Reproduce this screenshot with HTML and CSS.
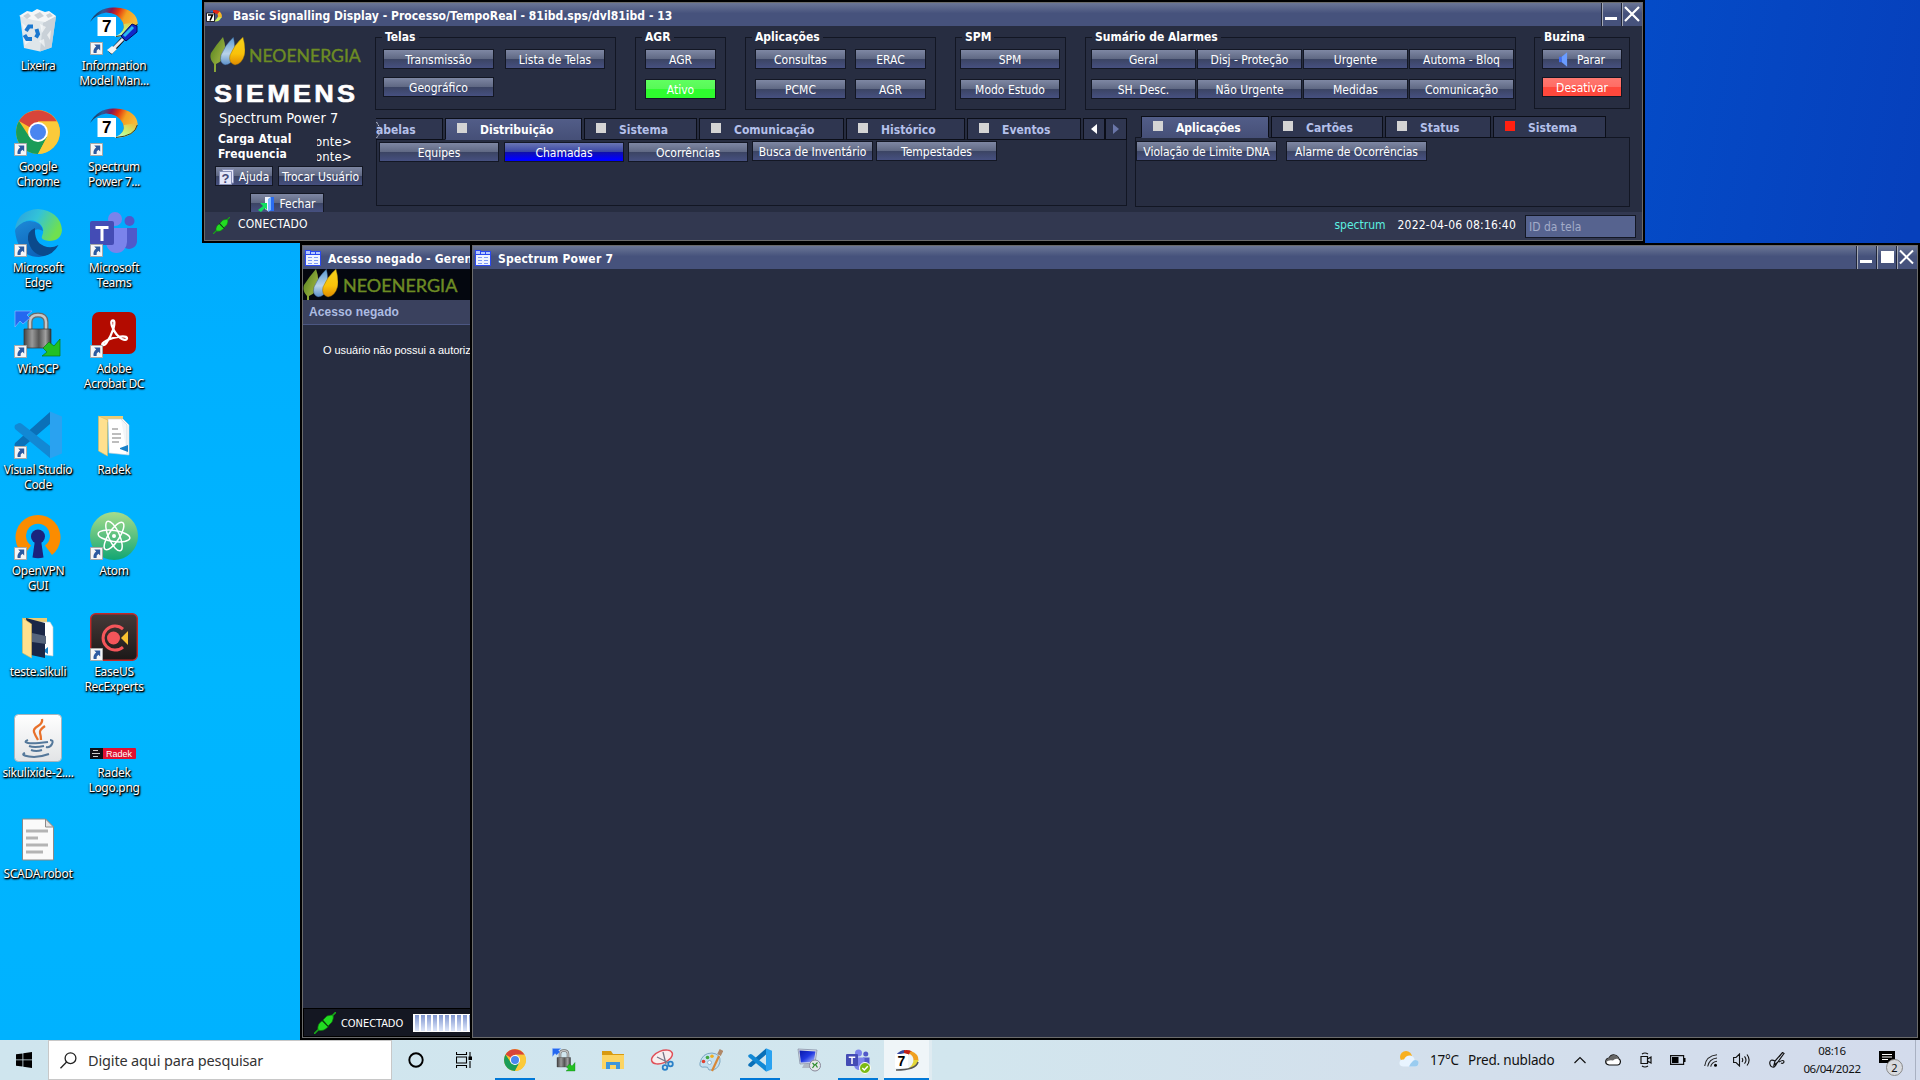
FILE: index.html
```html
<!DOCTYPE html>
<html lang="pt-BR">
<head>
<meta charset="utf-8">
<title>Spectrum Power 7</title>
<link rel="stylesheet" href="styles.css">
</head>
<body>
<svg class="defs" aria-hidden="true">
  <defs>
    <linearGradient id="swoosh" x1="0" y1="0.3" x2="1" y2="0.6">
      <stop offset="0" stop-color="#10304a"/><stop offset=".2" stop-color="#2a5a98"/><stop offset=".36" stop-color="#8a1450"/><stop offset=".5" stop-color="#e03010"/><stop offset=".68" stop-color="#f4a020"/><stop offset="1" stop-color="#f6c040"/>
    </linearGradient>
    <linearGradient id="swooshLow" x1="0" y1="1" x2="1" y2="0">
      <stop offset="0" stop-color="#c8f4ff"/><stop offset=".4" stop-color="#c0f880"/><stop offset="1" stop-color="#f6b030"/>
    </linearGradient>
    <linearGradient id="edgeTop" x1="0" y1="0" x2="1" y2="0.4"><stop offset="0" stop-color="#2a9ee0"/><stop offset=".5" stop-color="#33c3d8"/><stop offset="1" stop-color="#6fe050"/></linearGradient>
    <linearGradient id="edgeLeft" x1="0" y1="0" x2="0.6" y2="1"><stop offset="0" stop-color="#1d8ad8"/><stop offset="1" stop-color="#0c5fb5"/></linearGradient>
    <linearGradient id="atomBg" x1="0" y1="0" x2="0" y2="1"><stop offset="0" stop-color="#a5dc8c"/><stop offset="1" stop-color="#12a673"/></linearGradient>
    <linearGradient id="metal" x1="0" y1="0" x2="1" y2="0"><stop offset="0" stop-color="#444"/><stop offset=".3" stop-color="#999"/><stop offset=".55" stop-color="#555"/><stop offset=".8" stop-color="#a0a0a0"/><stop offset="1" stop-color="#333"/></linearGradient>
    <linearGradient id="paper" x1="0" y1="0" x2="0" y2="1"><stop offset="0" stop-color="#fff"/><stop offset="1" stop-color="#e2e4e6"/></linearGradient>
    <linearGradient id="dark" x1="0" y1="0" x2="0" y2="1"><stop offset="0" stop-color="#453a38"/><stop offset="1" stop-color="#1c1818"/></linearGradient>
    <linearGradient id="leafG" x1="0" y1="0" x2="1" y2="1"><stop offset="0" stop-color="#4f7f1c"/><stop offset=".6" stop-color="#8ea83a"/><stop offset="1" stop-color="#527a20"/></linearGradient>
    <linearGradient id="leafB" x1="0" y1="0" x2="0" y2="1"><stop offset="0" stop-color="#5b9ad0"/><stop offset=".6" stop-color="#b9d3ea"/><stop offset="1" stop-color="#5a8fc8"/></linearGradient>
    <linearGradient id="leafY" x1="0" y1="0" x2="0" y2="1"><stop offset="0" stop-color="#f7d21c"/><stop offset=".6" stop-color="#f9c20a"/><stop offset="1" stop-color="#e08a00"/></linearGradient>
    <linearGradient id="screen" x1="0" y1="0" x2="1" y2="1"><stop offset="0" stop-color="#0818a8"/><stop offset=".5" stop-color="#2038e0"/><stop offset="1" stop-color="#b8c8ff"/></linearGradient>

    <symbol id="i-shortcut" viewBox="0 0 13 13"><path fill="#f6f6f6" stroke="#a8a8a8" d="M.5.5h12v12H.5z"/><path fill="#2c5aa0" d="M4.2 2.5h6v6L8.400 6.700Q6 8.200 6.600 11H3.600Q2.800 7 6.200 4.500z"/></symbol>
    <symbol id="i-bin" viewBox="0 0 48 48"><path fill="#dfe6ea" d="M6 9h36l-4.500 31.500L26 44.500 10 41z"/><path fill="#c3ccd3" d="M29 16l13-7-4.500 31.500L26 44.500z" opacity=".8"/><path fill="#f4f6f7" d="M5 9l8-5 5 1 5-3 8 3 4-1 7 5-11 6-12-2z"/><path fill="#c9d0d6" d="M9 9l5-3 3 3-4 3zM20 8l6-3 4 4-6 3zM32 8l4-2 3 3-5 2z"/><path fill="#fff" opacity=".6" d="M8 16l5 4-3 5zM26 17l6 3-4 6zM33 28l4-5-1 10zM10 30l6 4-5 4zM25 34l5-2 1 8z"/><path fill="none" stroke="#1a78d0" stroke-width="4" d="M12 24l3-4.500h4M22.500 22l1.500 5-2 3.500M18 32h-5l-2.500-4"/></symbol>
    <symbol id="i-seven" viewBox="0 0 48 48"><path fill="url(#swoosh)" d="M0 15Q8 0 24 0.500C40 0 48 9 47.500 16C47 24 38 29 27 29Q36 24 33 15.500Q28 5.500 16 5.500Q6 7 0 15z"/><path fill="url(#swooshLow)" d="M47.500 15C47 24 38 30 24 30Q36 25 34 17z"/><path stroke="#3a3a20" fill="none" d="M47.300 17Q45 28 26 29.500"/><path fill="#fff" d="M7.500 10h18.500v19H7.500z"/><text x="16.700" y="25" font-family="Liberation Sans" font-size="17" font-weight="bold" text-anchor="middle" fill="#000">7</text></symbol>
    <symbol id="i-driver" viewBox="0 0 48 48"><path stroke="#111" stroke-width="4.500" d="M33 32L20 46"/><path stroke="#e8e8f0" stroke-width="3" d="M33 32L20 45"/><path fill="#f4f4f4" d="M17 43l5-4 5 3-5 5z"/><path fill="#1028c8" stroke="#000a60" d="M31 29L42 17l5 2v6L36 34z"/><path stroke="#28b8f0" stroke-width="3" d="M34 29l9-9"/></symbol>
    <symbol id="i-chrome" viewBox="0 0 48 48"><circle cx="24" cy="24" r="22" fill="#fbc02d"/><path fill="#d8453a" d="M24 24L5 13A22 22 0 0 1 43 13.500H24z"/><path fill="#1a9c58" d="M24 46A22 22 0 0 1 5 13l10.500 16L33 29z"/><path fill="#fbca3a" d="M24 46A22 22 0 0 0 43 13.500H24L33 29z"/><circle cx="24" cy="24" r="10" fill="#fff"/><circle cx="24" cy="24" r="8" fill="#4a86f0"/></symbol>
    <symbol id="i-edge" viewBox="0 0 48 48"><path fill="url(#edgeLeft)" d="M1 22Q3 12 16 12Q28 13 29 22Q20 17 18 27Q18 40 34 42Q40 41 44 36Q37 47 25 48Q4 48 1 22z"/><path fill="#0b4a8c" d="M21 19Q13 22 14 31Q17 45 29 47Q39 46 44.500 36Q37 40 30 37Q20 33 21 19z"/><path fill="url(#edgeTop)" d="M1 20Q4 1 24 0Q46 2 48 21Q47 32 35 32Q26 31 28 27Q31 21 27 16Q15 5 1 20z"/></symbol>
    <symbol id="i-teams" viewBox="0 0 48 48"><circle cx="25" cy="10" r="7" fill="#7b83eb"/><circle cx="39.500" cy="12" r="5" fill="#5059c9"/><path fill="#5059c9" d="M34 19h13v14a8 8 0 0 1-13 5z"/><path fill="#7b83eb" d="M16 19h21v14a10.500 11 0 0 1-21 0z"/><path fill="#444cb5" d="M2 12h20q2 0 2 2v20q0 2-2 2H2q-2 0-2-2V14q0-2 2-2z"/><path fill="#fff" d="M5.500 17h13v3h-5v12h-3V20h-5z"/></symbol>
    <symbol id="i-winscp" viewBox="0 0 48 48"><path fill="none" stroke="#6a6a6a" stroke-width="5" d="M16 20V12q0-7 8-7t8 7v8"/><path fill="none" stroke="#c8c8c8" stroke-width="2.500" d="M16 20V12q0-7 8-7t8 7v8"/><path fill="url(#metal)" stroke="#333" stroke-width=".7" d="M10 19h27v19H10z"/><path fill="#2468f0" stroke="#8ab8ff" stroke-width=".7" d="M1 1h17l-5 4 3 3-7 6-3-3-5 6z"/><path fill="#22c022" stroke="#0a7a10" stroke-width=".7" d="M46 46H28l5-4-4-4 6-6 5 4 6-7z"/></symbol>
    <symbol id="i-acrobat" viewBox="0 0 48 48"><rect x="2" y="2" width="44" height="42" rx="7" fill="#b30b00"/><path fill="none" stroke="#fff" stroke-width="2.300" d="M23 10.500c-2.500 0-2 4 0 8q3 7 9 10.500 4 2 5-.5c.5-3-7-2.500-14-.5q-8 2.500-10.500 5.500c-1 2 1.500 2.500 3.500 0q5-7 7.500-15 2-8-.5-8z"/></symbol>
    <symbol id="i-vscode" viewBox="0 0 48 48"><path fill="#0a70b8" d="M36 1L1 32q-1 2 0 4l4 2q2 0 3-1L36 13z"/><path fill="#1288d4" d="M36 47L1 18q-1-2 0-4l4-2q2 0 3 1L36 35z"/><path fill="#2aa2f0" d="M36 .5l12 5v37l-12 5z"/></symbol>
    <symbol id="i-folder" viewBox="0 0 48 48"><path fill="#eccb72" d="M9 5h24v6H9z"/><path fill="#fff" stroke="#c4ccd2" stroke-width=".6" d="M18 8h15l6 6v30l-20-2z"/><path fill="#f4f6f8" stroke="#c4ccd2" stroke-width=".6" d="M31 8l6 6v29"/><path stroke="#a8a8a8" stroke-width="1.300" d="M22 18h6M22 23h9M22 27h9M22 31h7"/><path fill="#1880c8" d="M38 34v7l-8-3v-1z"/><path fill="#ffe08e" stroke="#dcb85c" stroke-width=".6" d="M8.500 5l9 4v36l-9-5z"/></symbol>
    <symbol id="i-folder2" viewBox="0 0 48 48"><path fill="#eccb72" d="M9 5h24v8H9z"/><path fill="#fff" stroke="#c4ccd2" stroke-width=".6" d="M25 9h11l3 5v29l-14-2z"/><path fill="#1880c8" d="M34 34v7l-5-3z"/><path fill="#1b2747" d="M12 5l19 5v35l-14-3z"/><path fill="#56647c" d="M18 20l14 3v8l-14-2z"/><path fill="#ffe08e" stroke="#dcb85c" stroke-width=".6" d="M8.500 5l9 6v34l-9-5z"/></symbol>
    <symbol id="i-openvpn" viewBox="0 0 48 48"><path fill="#fb8c00" d="M10 43A22.500 22.500 0 1 1 38 43L31 33.500A12 12 0 1 0 17 33.500z"/><circle cx="24" cy="24.500" r="7" fill="#1a237e"/><path fill="#1a237e" d="M21 28h6l2.500 17.500q-5.500 1.500-11 0z"/></symbol>
    <symbol id="i-atom" viewBox="0 0 48 48"><circle cx="24" cy="24" r="24" fill="url(#atomBg)"/><g fill="none" stroke="#fff" stroke-width="1.500"><ellipse cx="24" cy="24" rx="16" ry="5.500" transform="rotate(8 24 24)"/><ellipse cx="24" cy="24" rx="16" ry="5.500" transform="rotate(66 24 24)"/><ellipse cx="24" cy="24" rx="16" ry="5.500" transform="rotate(123 24 24)"/></g><circle cx="24" cy="24" r="2" fill="#fff"/></symbol>
    <symbol id="i-easeus" viewBox="0 0 48 48"><rect x=".7" y=".7" width="46.600" height="46.600" rx="5" fill="url(#dark)" stroke="#c42828" stroke-width="1.400"/><path fill="none" stroke="#f4555a" stroke-width="3" d="M33 16a12 12 0 1 0 0 18"/><circle cx="23.500" cy="25" r="6.500" fill="#f4555a"/><path fill="#f8c030" d="M38 18v14l-7-7z"/></symbol>
    <symbol id="i-java" viewBox="0 0 48 48"><rect x=".5" y=".5" width="47" height="47" rx="4" fill="url(#paper)" stroke="#a8b4bc"/><path fill="none" stroke="#e8702a" stroke-width="2.300" d="M28 5q1 4-4 7t-4 6 4 8M31 12q-6 4-5 7t1 7"/><g fill="none" stroke="#54789a" stroke-width="2"><path d="M14 26q-5 2 0 3t20-1M36 26q4 0 2 4t-6 3M15 32q5 2 15 0M17 36q5 2 11 0M11 39q-5 2 4 3.500t20-2.500"/></g></symbol>
    <symbol id="i-radek" viewBox="0 0 48 48"><rect y="34" width="46" height="11" rx="1" fill="#e01030"/><path fill="#101018" d="M0 34h13v11H0z"/><path stroke="#ccc" d="M3 36.500h5M2 39.500h8M3 42.500h5"/><text x="16" y="43" font-family="Liberation Sans" font-size="9" fill="#fff" textLength="26">Radek</text></symbol>
    <symbol id="i-file" viewBox="0 0 48 48"><path fill="#fafafa" stroke="#8a8a8a" d="M8.500 4h23l8 8v33h-31z"/><path fill="#e4e4e4" stroke="#8a8a8a" d="M31.500 4v8h8z"/><path stroke="#b4b4b4" stroke-width="3" d="M12 16h22M12 23h12M12 30h22M12 37h17"/></symbol>
    <symbol id="i-leaves" viewBox="0 0 35 35"><path fill="url(#leafG)" d="M13 0Q16 8 15 16Q14 24 6 27V35H4V27Q-1 22 1 16Q6 8 13 0z"/><path fill="url(#leafB)" stroke="#28406a" stroke-width=".4" d="M23.500 0Q26 12 24 20Q21 28 15 28Q9 26 11 18Q15 8 23.500 0z"/><path fill="url(#leafY)" stroke="#7a6010" stroke-width=".4" d="M33 0Q36 11 34.500 18Q32 27 25 28Q18 26 20 18Q24 8 33 0z"/></symbol>
    <symbol id="i-plug" viewBox="0 0 22 22"><path stroke="#18a818" stroke-width="1.600" d="M0 22l5-5M17 5l5-5"/><path fill="#22dd22" stroke="#0c7c0c" stroke-width=".7" d="M4 18Q3 12 8 9l6 6Q9 20 4 18zM9 8l4-4q4-1 6-1 1 3-1 7l-4 4z"/><path stroke="#0a400a" d="M8 8l7 7"/></symbol>
    <symbol id="i-pane" viewBox="0 0 16 16"><path fill="#2a48f0" d="M0 0h6v1h10v15H0z"/><path fill="#b4c8ff" d="M1 1h4v3H1zM6 2h4v2H6zM11 2h4v2h-4z"/><path fill="#eef3ff" d="M1 5h14v10H1z"/><path stroke="#7d9af6" d="M3 7.500h4M3 10.500h4M3 13.500h4M9 7.500h4M9 10.500h4M9 13.500h4"/></symbol>
  </defs>
</svg>

<main class="desktop">
  <section class="icons">
    <div class="shortcut"><span class="pic"><svg><use href="#i-bin"/></svg></span><span class="name">Lixeira</span></div>
    <div class="shortcut"><span class="pic"><svg><use href="#i-seven"/></svg><svg><use href="#i-driver"/></svg><svg class="arrow"><use href="#i-shortcut"/></svg></span><span class="name">Information<br>Model Man...</span></div>
    <div class="shortcut"><span class="pic"><svg><use href="#i-chrome"/></svg><svg class="arrow"><use href="#i-shortcut"/></svg></span><span class="name">Google<br>Chrome</span></div>
    <div class="shortcut"><span class="pic"><svg><use href="#i-seven"/></svg><svg class="arrow"><use href="#i-shortcut"/></svg></span><span class="name">Spectrum<br>Power 7...</span></div>
    <div class="shortcut"><span class="pic"><svg><use href="#i-edge"/></svg><svg class="arrow"><use href="#i-shortcut"/></svg></span><span class="name">Microsoft<br>Edge</span></div>
    <div class="shortcut"><span class="pic"><svg><use href="#i-teams"/></svg><svg class="arrow"><use href="#i-shortcut"/></svg></span><span class="name">Microsoft<br>Teams</span></div>
    <div class="shortcut"><span class="pic"><svg><use href="#i-winscp"/></svg><svg class="arrow"><use href="#i-shortcut"/></svg></span><span class="name">WinSCP</span></div>
    <div class="shortcut"><span class="pic"><svg><use href="#i-acrobat"/></svg><svg class="arrow"><use href="#i-shortcut"/></svg></span><span class="name">Adobe<br>Acrobat DC</span></div>
    <div class="shortcut"><span class="pic"><svg><use href="#i-vscode"/></svg><svg class="arrow"><use href="#i-shortcut"/></svg></span><span class="name">Visual Studio<br>Code</span></div>
    <div class="shortcut"><span class="pic"><svg><use href="#i-folder"/></svg></span><span class="name">Radek</span></div>
    <div class="shortcut"><span class="pic"><svg><use href="#i-openvpn"/></svg><svg class="arrow"><use href="#i-shortcut"/></svg></span><span class="name">OpenVPN<br>GUI</span></div>
    <div class="shortcut"><span class="pic"><svg><use href="#i-atom"/></svg><svg class="arrow"><use href="#i-shortcut"/></svg></span><span class="name">Atom</span></div>
    <div class="shortcut"><span class="pic"><svg><use href="#i-folder2"/></svg></span><span class="name">teste.sikuli</span></div>
    <div class="shortcut"><span class="pic"><svg><use href="#i-easeus"/></svg><svg class="arrow"><use href="#i-shortcut"/></svg></span><span class="name">EaseUS<br>RecExperts</span></div>
    <div class="shortcut"><span class="pic"><svg><use href="#i-java"/></svg></span><span class="name">sikulixide-2....</span></div>
    <div class="shortcut"><span class="pic"><svg><use href="#i-radek"/></svg></span><span class="name">Radek<br>Logo.png</span></div>
    <div class="shortcut"><span class="pic"><svg><use href="#i-file"/></svg></span><span class="name">SCADA.robot</span></div>
  </section>

  <section class="window win-denied">
    <header class="titlebar"><svg class="pane-icon"><use href="#i-pane"/></svg><h2>Acesso negado - Geren</h2></header>
    <div class="brand-strip"><svg class="leaves"><use href="#i-leaves"/></svg><span class="neo">NEOENERGIA</span></div>
    <h3 class="denied-head">Acesso negado</h3>
    <p class="denied-text">O usuário não possui a autoriz</p>
    <footer class="denied-foot"><svg class="plug"><use href="#i-plug"/></svg><span>CONECTADO</span><div class="progress"></div></footer>
  </section>

  <section class="window win-spectrum">
    <header class="titlebar"><svg class="pane-icon"><use href="#i-pane"/></svg><h2>Spectrum Power 7</h2>
      <div class="controls"><span class="ctl"><svg viewBox="0 0 18 22"><path fill="#fff" d="M2 14h12v3H2z"/></svg></span><span class="ctl"><svg viewBox="0 0 18 22"><path fill="#fff" d="M3 5h13v12H3z"/></svg></span><span class="ctl"><svg viewBox="0 0 18 22"><path stroke="#fff" stroke-width="2" d="M2 4.500l13 13M15 4.500l-13 13"/></svg></span></div>
    </header>
  </section>

  <section class="window win-main">
    <header class="titlebar"><svg class="seven-icon" viewBox="0 0 17 12"><path fill="#2a6ad0" d="M3 3q2-2.500 5-2.500v3H3z"/><path fill="#e02818" d="M7 0q5-.5 7.500 2l-3 2L7 3z"/><path fill="#f5b428" d="M13.500 1.500q3.500 3 2 6.500l-4 0q1-2 0-4z"/><path fill="#c8f060" d="M15.500 7q-2 5-7 4.500l3-4z"/><path fill="#fff" stroke="#000" stroke-width=".8" d="M.5 3h8v8.500h-8z"/><path fill="none" stroke="#000" stroke-width="1.600" d="M2 5h4.500L4 10.500"/></svg><h2>Basic Signalling Display - Processo/TempoReal - 81ibd.sps/dvl81ibd - 13</h2>
      <div class="controls"><span class="ctl"><svg viewBox="0 0 18 22"><path fill="#fff" d="M2 14h12v3H2z"/></svg></span><span class="ctl"><svg viewBox="0 0 18 22"><path stroke="#fff" stroke-width="2.200" d="M2 4l14 14M16 4l-14 14"/></svg></span></div>
    </header>

    <div class="main-body">
      <aside class="brand">
        <div class="brand-neo"><svg class="leaves"><use href="#i-leaves"/></svg><span class="neo">NEOENERGIA</span></div>
        <div class="siemens">SIEMENS</div>
        <div class="product">Spectrum Power 7</div>
        <div class="metric"><b>Carga Atual</b><span>onte&gt;</span></div>
        <div class="metric"><b>Frequencia</b><span>onte&gt;</span></div>
        <div class="brand-buttons">
          <button class="btn help"><svg viewBox="0 0 15 16"><path fill="#e4e6f8" stroke="#8890b8" d="M.5 2.500h12v13H.5zM3 .5h11.500V14H13"/><text x="6.500" y="14" text-anchor="middle" font-family="Liberation Sans" font-weight="bold" font-size="13" fill="#444a78">?</text></svg>Ajuda</button>
          <button class="btn">Trocar Usuário</button>
        </div>
        <button class="btn close"><svg viewBox="0 0 17 16"><path fill="#2a6cf0" d="M7 1h9v14h-5z"/><path fill="#f2f6ff" d="M7 1h6l-3 3v11l-3-2z"/><path fill="#7ab8ff" d="M10 3l3-2v13l-3 2z"/><path fill="#12e060" d="M2 7h7v7L7 12l-4 4-3-2 5-4z"/></svg>Fechar</button>
      </aside>

      <div class="console">
        <div class="groups">
          <div class="group g-telas"><span class="legend">Telas</span><button class="btn">Transmissão</button><button class="btn">Lista de Telas</button><button class="btn">Geográfico</button></div>
          <div class="group g-agr"><span class="legend">AGR</span><button class="btn">AGR</button><button class="btn green">Ativo</button></div>
          <div class="group g-apps"><span class="legend">Aplicações</span><button class="btn">Consultas</button><button class="btn">ERAC</button><button class="btn">PCMC</button><button class="btn">AGR</button></div>
          <div class="group g-spm"><span class="legend">SPM</span><button class="btn">SPM</button><button class="btn">Modo Estudo</button></div>
          <div class="group g-alarms"><span class="legend">Sumário de Alarmes</span><button class="btn">Geral</button><button class="btn">Disj - Proteção</button><button class="btn">Urgente</button><button class="btn">Automa - Bloq</button><button class="btn">SH. Desc.</button><button class="btn">Não Urgente</button><button class="btn">Medidas</button><button class="btn">Comunicação</button></div>
          <div class="group g-horn"><span class="legend">Buzina</span><button class="btn"><svg viewBox="0 0 10 16"><path fill="#3f6cf4" d="M0 5h3v6H0z"/><path fill="#6a9cff" d="M3 5l6-5v16l-6-5z"/></svg>Parar</button><button class="btn red">Desativar</button></div>
        </div>

        <div class="panels">
          <div class="tabset tabset-left">
            <nav class="tabs">
              <span class="tab t1"><svg class="more" viewBox="0 0 5 18"><path fill="none" stroke="#c8ccd8" stroke-dasharray="2 1" d="M.5 1l3.500 6-3.500 4M.5 17l3.500-5"/></svg>abelas</span><span class="tab t2 on"><i></i>Distribuição</span><span class="tab t3"><i></i>Sistema</span><span class="tab t4"><i></i>Comunicação</span><span class="tab t5"><i></i>Histórico</span><span class="tab t6"><i></i>Eventos</span>
              <span class="scroll"><svg viewBox="0 0 6 10"><path fill="#fff" d="M6 0v10L0 5z"/></svg></span><span class="scroll"><svg viewBox="0 0 6 10"><path fill="#6a76a8" d="M0 0v10l6-5z"/></svg></span>
            </nav>
            <div class="tab-panel"><button class="btn">Equipes</button><button class="btn blue">Chamadas</button><button class="btn">Ocorrências</button><button class="btn up">Busca de Inventário</button><button class="btn up">Tempestades</button></div>
          </div>
          <div class="tabset tabset-right">
            <nav class="tabs">
              <span class="tab r1 on"><i></i>Aplicações</span><span class="tab r2"><i></i>Cartões</span><span class="tab r3"><i></i>Status</span><span class="tab r4"><i class="alert"></i>Sistema</span>
            </nav>
            <div class="tab-panel"><button class="btn">Violação de Limite DNA</button><button class="btn">Alarme de Ocorrências</button></div>
          </div>
        </div>
      </div>
    </div>

    <footer class="statusbar"><svg class="plug"><use href="#i-plug"/></svg><span class="conn">CONECTADO</span><span class="user">spectrum</span><span class="stamp">2022-04-06 08:16:40</span><span class="screen-id">ID da tela</span></footer>
  </section>
</main>

<footer class="taskbar">
  <span class="start"><svg viewBox="0 0 16 16"><path d="M0 2.300L6.500 1.400v6.100H0zM7.300 1.300L16 0v7.500H7.300zM0 8.300h6.500v6.200L0 13.700zM7.300 8.300H16V16l-8.700-1.300z"/></svg></span>
  <div class="search"><svg viewBox="0 0 17 17"><circle cx="10.500" cy="6.200" r="5.400" fill="none" stroke="#222" stroke-width="1.300"/><path stroke="#222" stroke-width="1.300" d="M6.600 10L.5 16.200"/></svg><span>Digite aqui para pesquisar</span></div>
  <span class="slot"><svg viewBox="0 0 16 16"><circle cx="8" cy="8" r="6.700" fill="none" stroke="#000" stroke-width="1.900"/></svg></span>
  <span class="slot"><svg viewBox="0 0 16 16"><path fill="none" stroke="#000" stroke-width="1.100" d="M.5 0v2.500h10V0M.5 16v-2.500h10V16M.5 5h10v6H.5zM14 0v5M14 9v7"/><path d="M12.500 4.500H16V8h-3.500z"/></svg></span>
  <div class="apps">
    <span class="app run"><svg><use href="#i-chrome"/></svg></span>
    <span class="app"><svg><use href="#i-winscp"/></svg></span>
    <span class="app"><svg viewBox="0 0 24 24"><path fill="#d89a10" d="M1 3h9l2 3h11v4H1z"/><path fill="#fcd462" d="M1 7h22v14H1z"/><path fill="#3d96dc" d="M5 21v-7h14v7h-4v-4H9v4z"/></svg></span>
    <span class="app"><svg viewBox="0 0 24 24"><ellipse cx="12" cy="9" rx="11" ry="6" transform="rotate(-22 12 9)" fill="#f8eeee" stroke="#e05058" stroke-width="1.400"/><path stroke="#778" stroke-width="1.300" d="M13 4l3 12M7 9l12 6"/><g fill="none" stroke="#2a80c8" stroke-width="1.800"><circle cx="15" cy="19.500" r="2.300"/><circle cx="20.500" cy="16" r="2.300"/></g></svg></span>
    <span class="app"><svg viewBox="0 0 24 24"><path fill="#c4e0f0" stroke="#6898b8" stroke-width=".8" d="M1 15q2-10 12-10 9 1 8 9-2 9-11 8-1-4-4-3-6 1-5-4z"/><circle cx="4.500" cy="13.500" r="1.800" fill="#e04030"/><circle cx="8.500" cy="9.500" r="1.800" fill="#40a840"/><circle cx="13" cy="8.300" r="1.800" fill="#f0b020"/><circle cx="10.500" cy="14.500" r="2" fill="#eef8ff" stroke="#6898b8" stroke-width=".6"/><path stroke="#d88838" stroke-width="2.200" d="M13 23l7-15"/><path stroke="#b08868" stroke-width="4" d="M20 7l2.500-5"/></svg></span>
    <span class="app run"><svg><use href="#i-vscode"/></svg></span>
    <span class="app"><svg viewBox="0 0 24 24"><path fill="#d8dce4" stroke="#8088a0" stroke-width=".7" d="M1 1l19 1-2 13-15 1z"/><path fill="url(#screen)" d="M2.500 2.500l16 1-1.700 10.500-13 .5z"/><path fill="#b0b8c4" d="M7 16h6l1 4H5z"/><circle cx="18" cy="17.500" r="5.500" fill="#e4e8ea" stroke="#889"/><path fill="none" stroke="#2a8a2a" stroke-width="1.200" d="M15.500 15l2 2-2 3M20.500 14.500l-2 2 2 3"/></svg></span>
    <span class="app run"><svg><use href="#i-teams"/></svg><svg class="check" viewBox="0 0 12 12"><circle cx="6" cy="6" r="5.500" fill="#7cba14" stroke="#fff"/><path fill="none" stroke="#fff" stroke-width="1.500" d="M3.300 6l2 2 3.500-3.800"/></svg></span>
    <span class="app active"><svg viewBox="0 0 24 24"><path fill="#3848a0" d="M1 7Q5 2 10 2v3z"/><path fill="#c02018" d="M9 2.200q5-.7 8 1.300l-3 3-5-1.500z"/><path fill="#f0a020" d="M16 3q8 3 7.500 9.500l-5 0q0-5-4.500-7z"/><path fill="#e4d838" d="M23.500 12q-1 8-11 9 6-4 6-9z"/><path stroke="#555" fill="none" stroke-width="1.500" d="M23 14q-2 8-22 8"/><path fill="#fff" d="M0 6h13v14H0z"/><text x="6.500" y="18" text-anchor="middle" font-family="Liberation Sans" font-size="14" font-weight="bold">7</text></svg></span>
  </div>
  <div class="tray">
    <svg class="weather" viewBox="0 0 20 16"><circle cx="7" cy="6" r="6" fill="#f8b020"/><path fill="#e8f4ff" d="M4 15.500q-4-.5-3.500-4T5 8.500Q7 4 11.500 4.500q4 1 4 4.500 4 0 4 3.500t-4 3z"/><path fill="#9accf0" d="M10 15.500q3-6 6-6.500 4 0 3.500 3.500t-4 3z"/></svg>
    <span class="temp">17°C</span><span class="sky">Pred. nublado</span>
    <svg class="chev" viewBox="0 0 12 8"><path fill="none" stroke="#111" stroke-width="1.200" d="M.5 7L6 1.500 11.500 7"/></svg>
    <svg class="cloud" viewBox="0 0 16 12"><path fill="#fff" stroke="#111" stroke-width="1.200" d="M4 11q-3.500-.5-3.300-3.500T4 4Q6 .5 9.500 1T14 5q1.800 1 1.300 3.500T12.500 11z"/><path fill="#666" d="M4 4Q6 .5 9.500 1T14 5q-4-1-6 1.500Q4 5.500 1 8q0-3.500 3-4z"/></svg>
    <svg class="meet" viewBox="0 0 12 16"><path fill="none" stroke="#111" stroke-width="1.200" d="M1 4.500h6.500v7H1zM7.500 7L11 5v6L7.500 9M2 2Q5 0 8 2M2 14q3 2 6 0"/></svg>
    <svg class="batt" viewBox="0 0 16 10"><path fill="none" stroke="#111" stroke-width="1.200" d="M.6.600h13v8.800H.6z"/><path d="M2 2h6.500v6H2zM14 3h1.500v4H14z"/></svg>
    <svg class="wifi" viewBox="0 0 14 13"><g fill="none" stroke="#222" stroke-width="1.100"><path d="M.7 12Q2 2 13 .8M3.700 12.500Q5 5 13 4M6.700 12.700Q7.500 8 13 7.200"/></g><circle cx="11.500" cy="11.300" r="1.500"/></svg>
    <svg class="vol" viewBox="0 0 17 14"><path fill="none" stroke="#111" stroke-width="1.100" d="M.6 4.500H3l3.500-3.500v12L3 9.500H.6zM9 5q1.500 2 0 4M11.500 3.300q3 3.700 0 7.400M14 1.500q4.200 5.500 0 11"/></svg>
    <svg class="pen" viewBox="0 0 16 16"><path fill="none" stroke="#111" stroke-width="1.200" d="M15 1.500l-1.500-1L6 9l-1 4 3.500-2.500zM6 9Q1 6.500.7 11q.5 4 3.500 4.200 2-.3 3.500-4M10 5l2-2.500M10 10q5-3 5 0-1 2-3 1"/></svg>
    <div class="clock"><span>08:16</span><span>06/04/2022</span></div>
    <div class="notif"><svg viewBox="0 0 16 16"><path d="M0 0h16v12h-4v4l-4-4H0z"/><path stroke="#fff" stroke-width="1.200" d="M3 3.500h10M3 6h10M3 8.500h6"/></svg><span>2</span></div>
    <div class="peek"></div>
  </div>
</footer>
</body>
</html>
```
FILE: styles.css
```css
* { box-sizing: border-box; }
body {
  margin: 0;
  width: 1920px;
  height: 1080px;
  overflow: hidden;
  display: flex;
  flex-direction: column;
  font-family: "DejaVu Sans Condensed", "DejaVu Sans", sans-serif;
  font-stretch: condensed;
  font-size: 12px;
  color: #fff;
}
h2, h3, p { margin: 0; }
svg { display: block; }
.defs { position: absolute; width: 0; height: 0; }

.desktop {
  position: relative;
  flex: 0 0 1040px;
  background:
    linear-gradient(#00a6fd, #00b0ff 35%, #00b6ff 65%, #00b2ff) 0 0 / 600px 100% no-repeat,
    linear-gradient(100deg, #0078e4 600px, #044cc8 1600px, #0640bc 1920px);
}

/* desktop shortcuts */
.icons {
  display: grid;
  grid-template-columns: 76px 76px;
  grid-auto-rows: 101px;
  width: 152px;
  padding-top: 7px;
  font: 12px/15px "Noto Sans", "Open Sans", sans-serif;
  font-stretch: normal;
}
.shortcut { display: flex; flex-direction: column; align-items: center; }
.pic { display: grid; width: 48px; height: 48px; }
.pic svg { grid-area: 1 / 1; width: 48px; height: 48px; }
.pic svg.arrow { width: 13px; height: 13px; align-self: end; }
.name {
  margin-top: 3px;
  text-align: center;
  white-space: nowrap;
  letter-spacing: -.3px;
  text-shadow: 1px 1px 2px #000, 0 1px 2px #000, 1px 1px 1px #000;
}

/* windows */
.window {
  position: absolute;
  display: flex;
  flex-direction: column;
  background: #272d41;
  border: 1px solid #6b6b6b;
  outline: 2px solid #000;
  overflow: hidden;
}
.win-main { left: 204px; top: 2px; width: 1439px; height: 239px; }
.win-denied { left: 302px; top: 245px; width: 168px; height: 793px; border-right: 0; }
.win-spectrum { left: 472px; top: 245px; width: 1446px; height: 793px; }
.titlebar {
  flex: 0 0 23px;
  display: flex;
  align-items: center;
  padding-left: 2px;
  background: linear-gradient(#6b7696, #46527c 45%, #46527c);
}
.titlebar h2 { font-size: 12px; font-weight: bold; line-height: 20px; white-space: nowrap; letter-spacing: .22px; margin: 2px 0 0 7px; }
.win-main .titlebar { padding-left: 1px; }
.win-main .titlebar h2 { letter-spacing: .05px; margin-left: 10px; }
.pane-icon { flex: none; width: 16px; height: 16px; margin-top: 1px; }
.seven-icon { width: 17px; height: 12px; margin-top: 2px; }
.controls { display: flex; margin-left: auto; align-self: stretch; }
.ctl { width: 20px; border-left: 1px solid #a4a8b4; box-shadow: -1px 0 #20263a; }
.ctl svg { width: 18px; height: 22px; }
.neo { font-family: Lato, "Open Sans", sans-serif; font-size: 17.6px; color: #6d8c24; font-weight: 400; -webkit-text-stroke: .4px #6d8c24; }
.leaves { flex: none; width: 35px; height: 35px; }

/* access denied window */
.brand-strip { flex: 0 0 31px; display: flex; background: #04070f; overflow: hidden; }
.brand-strip .neo { margin-left: 5px; font-size: 18px; line-height: 33px; }
.denied-head {
  flex: 0 0 22px;
  padding: 1px 0 0 6px;
  background: #3a415e;
  border-bottom: 1px solid #4c5783;
  font: bold 12px/23px "Liberation Sans", sans-serif;
  letter-spacing: .1px;
  color: #adbce2;
}
.denied-text { flex: 1; padding: 17px 0 0 20px; font: 11px/16px "Liberation Sans", sans-serif; letter-spacing: -.05px; white-space: nowrap; }
.denied-foot {
  flex: 0 0 29px;
  display: flex;
  align-items: center;
  padding-left: 10px;
  background: #141722;
  border: 1px solid #000;
  border-right: 0;
  font-size: 11px;
  letter-spacing: -.05px;
}
.denied-foot span { padding-top: 1px; }
.denied-foot .plug { flex: none; width: 22px; height: 22px; margin-right: 5px; }
.progress {
  flex: 1;
  height: 18px;
  margin-left: 10px;
  border: 1px solid #fff;
  border-right: 0;
  background: repeating-linear-gradient(90deg, #fff 0 1px, transparent 1px 5px, #fff 5px 6px), linear-gradient(#7f95cf, #dfe8fb);
}

/* buttons */
.btn {
  display: flex;
  align-items: center;
  justify-content: center;
  height: 20px;
  padding: 1px 0 0;
  border: 1px solid #131724;
  background: linear-gradient(#7e87a3, #5f6883 50%, #3b4463 50%, #465080);
  color: #fff;
  font: inherit;
  white-space: nowrap;
}
.btn.green { background: linear-gradient(#60ff60, #58f858 50%, #2efc2e 50%, #2efc2e); }
.btn.red { background: linear-gradient(#ff7870, #ff6c64 50%, #ff483c 50%, #ff483c); }
.btn.blue { background: linear-gradient(#6a76b4, #3844a4 50%, #1010a8 50%, #0000ff 90%); }

/* main window */
.main-body { flex: 0 0 186px; display: flex; overflow: hidden; }
.brand { flex: 0 0 170px; display: flex; flex-direction: column; align-items: flex-start; }
.brand > * { flex-shrink: 0; }
.brand-neo { display: flex; height: 46px; padding: 11px 0 0 5px; }
.brand-neo .neo { margin-left: 4px; line-height: 37px; }
.siemens { margin: 8px 0 0 9px; width: 142px; height: 26px; font: bold 23.5px/28px "Liberation Sans", sans-serif; letter-spacing: 2.8px; -webkit-text-stroke: .6px #fff; transform: scaleX(1.15); transform-origin: 0 0; }
.product { margin: 2px 0 0 14px; height: 20px; font-size: 14.500px; line-height: 20px; }
.metric { display: flex; height: 15px; margin-left: 13px; }
.product + .metric { margin-top: 4px; }
.metric b { width: 99px; height: 13px; overflow: hidden; line-height: 15px; letter-spacing: .2px; }
.metric span { width: 36px; height: 18px; font-size: 13px; line-height: 20px; letter-spacing: .15px; text-indent: -2px; overflow: hidden; }
.brand-buttons { display: flex; gap: 5px; margin: 4px 0 0 10px; }
.brand-buttons .btn { width: 85px; }
.brand-buttons .help { width: 58px; gap: 5px; }
.help svg { width: 15px; height: 16px; }
.btn.close { width: 74px; margin: 7px 0 0 45px; gap: 4px; }
.close svg { width: 17px; height: 16px; }

.console { flex: 1; padding-top: 11px; }
.groups { display: flex; align-items: flex-start; gap: 19px; }
.group {
  position: relative;
  display: grid;
  grid-template-rows: 20px 20px;
  align-content: start;
  height: 73px;
  padding-top: 11px;
  row-gap: 10px;
  border: 1px solid #121623;
}
.legend { position: absolute; top: -9px; left: 6px; padding: 0 3px; background: #272d41; font-weight: bold; line-height: 16px; }
.g-telas { width: 241px; grid-template-columns: 111px 100px; column-gap: 11px; padding-left: 7px; row-gap: 8px; }
.g-agr { width: 91px; grid-template-columns: 71px; padding-left: 9px; }
.g-apps { width: 191px; grid-template-columns: 91px 71px; column-gap: 9px; padding-left: 9px; }
.g-spm { width: 111px; grid-template-columns: 100px; padding-left: 4px; }
.g-alarms { width: 431px; grid-template-columns: repeat(4, 105px); column-gap: 1px; padding-left: 5px; }
.g-horn { width: 96px; height: 72px; margin-left: -1px; grid-template-columns: 80px; padding-left: 7px; row-gap: 8px; }
.g-horn svg { width: 9px; height: 15px; margin-right: 9px; }

.panels { display: flex; margin-top: 6px; }
.tabset-left { width: 751px; margin: 2px 0 0 1px; }
.tabset-right { width: 495px; margin-left: 8px; }
.tabs { display: flex; height: 22px; }
.tabset-right .tabs { padding-left: 6px; }
.tab {
  display: flex;
  align-items: center;
  height: 22px;
  padding: 1px 0 0 11px;
  margin-right: 2px;
  border: 1px solid #0b0e18;
  background: #2f3650;
  color: #b4c0ea;
  font-weight: bold;
}
.tab i { width: 10px; height: 10px; margin: -4px 13px 0 0; background: #d4d4d4; }
.tab i.alert { background: #ff2010; }
.tab.on { background: linear-gradient(#525d88, #465078); color: #fff; border-bottom-color: #465078; }
.t1 { width: 67px; padding-left: 0; border-left: 0; }
.more { width: 5px; height: 18px; margin-right: -5px; }
.t2 { width: 137px; }
.t3 { width: 113px; }
.t4 { width: 145px; }
.t5 { width: 119px; }
.t6 { width: 114px; }
.r1 { width: 128px; }
.r2 { width: 112px; }
.r3 { width: 106px; }
.r4 { width: 113px; }
.scroll { display: grid; place-items: center; width: 22px; height: 22px; border: 1px solid #0b0e18; background: #2f3650; }
.scroll svg { width: 6px; height: 10px; }
.tab-panel { display: flex; align-items: flex-start; height: 67px; margin-top: -1px; border: 1px solid #121623; }
.tabset-left .tab-panel { padding: 2px 0 0 2px; gap: 4px; }
.tabset-left .btn { width: 120px; }
.tabset-left .btn.up { width: 121px; margin-top: -1px; }
.tabset-left .blue { margin-left: 1px; }
.tabset-left .btn.up + .btn.up { margin-left: -1px; }
.tabset-right .tab-panel { height: 70px; padding-top: 3px; gap: 9px; }
.tabset-right .btn { width: 141px; }

.statusbar { flex: 1; display: flex; align-items: center; padding: 0 6px 0 8px; background: #323850; }
.statusbar .plug { width: 17px; height: 17px; margin-top: -2px; }
.conn { margin: -5px 0 0 8px; letter-spacing: .15px; }
.user { margin: -3px 12px 0 auto; color: #5cf0e0; }
.stamp { margin: -3px 9px 0 0; letter-spacing: .2px; }
.screen-id { width: 111px; height: 23px; padding-left: 3px; line-height: 23px; border: 1px solid #131724; background: #56638f; color: #a3acc8; }

/* taskbar */
.taskbar {
  flex: 0 0 40px;
  display: flex;
  background: linear-gradient(90deg, #cfe5ee, #d2e6ee 50%, #d3e0ec 72%, #d3dbec);
  color: #111;
  font-family: "Noto Sans", "Open Sans", sans-serif;
  font-stretch: normal;
}
.start { width: 48px; display: grid; place-items: center; }
.start svg { width: 16px; height: 16px; }
.search { display: flex; align-items: center; width: 344px; padding-left: 11px; background: #fff; border: 1px solid #c8c8c8; }
.search svg { width: 17px; height: 17px; margin-right: 11px; }
.search span { font-size: 14.500px; color: #333; letter-spacing: -.15px; }
.slot { width: 48px; display: grid; place-items: center; }
.slot svg { width: 16px; height: 16px; }
.apps { display: flex; padding-left: 2px; }
.app { display: grid; place-items: center; width: 49px; height: 40px; position: relative; }
.app svg { width: 24px; height: 24px; }
.app.run { background: linear-gradient(#0078d7, #0078d7) 50% 100% / 40px 2px no-repeat; }
.app.active { margin-left: 2px; width: 45px; background: linear-gradient(#0078d7, #0078d7) 50% 100% / 100% 2px no-repeat, #eff5f8; box-shadow: 3px 0 #dfebf1; }
.app .check { position: absolute; left: 26px; top: 22px; width: 12px; height: 12px; }
.tray { display: flex; align-items: center; margin-left: auto; width: 521px; }
.tray svg { flex: none; }
.weather { width: 20px; height: 16px; margin-bottom: 2px; }
.temp, .sky { font-size: 13.500px; white-space: nowrap; letter-spacing: -.2px; }
.temp { width: 38px; margin-left: 11px; }
.sky { width: 87px; }
.chev { width: 12px; height: 8px; margin-left: 19px; }
.cloud { width: 16px; height: 12px; margin-left: 19px; }
.meet { width: 12px; height: 16px; margin-left: 19px; }
.batt { width: 16px; height: 10px; margin-left: 18px; }
.wifi { width: 14px; height: 13px; margin-left: 18px; }
.vol { width: 17px; height: 14px; margin-left: 15px; }
.pen { width: 16px; height: 16px; margin-left: 19px; }
.clock { display: flex; flex-direction: column; align-items: center; width: 62px; margin-left: 16px; font-size: 11.500px; line-height: 18px; letter-spacing: -.4px; }
.notif { position: relative; margin-left: 16px; }
.notif svg { width: 16px; height: 16px; margin-bottom: 3px; }
.notif span { position: absolute; left: 7px; top: 8px; width: 17px; height: 17px; border: 1px solid #888; border-radius: 50%; background: #d8dade; font-size: 11px; line-height: 15px; text-align: center; }
.peek { align-self: stretch; width: 5px; margin-left: auto; border-left: 1px solid #a9b1c2; }
```
